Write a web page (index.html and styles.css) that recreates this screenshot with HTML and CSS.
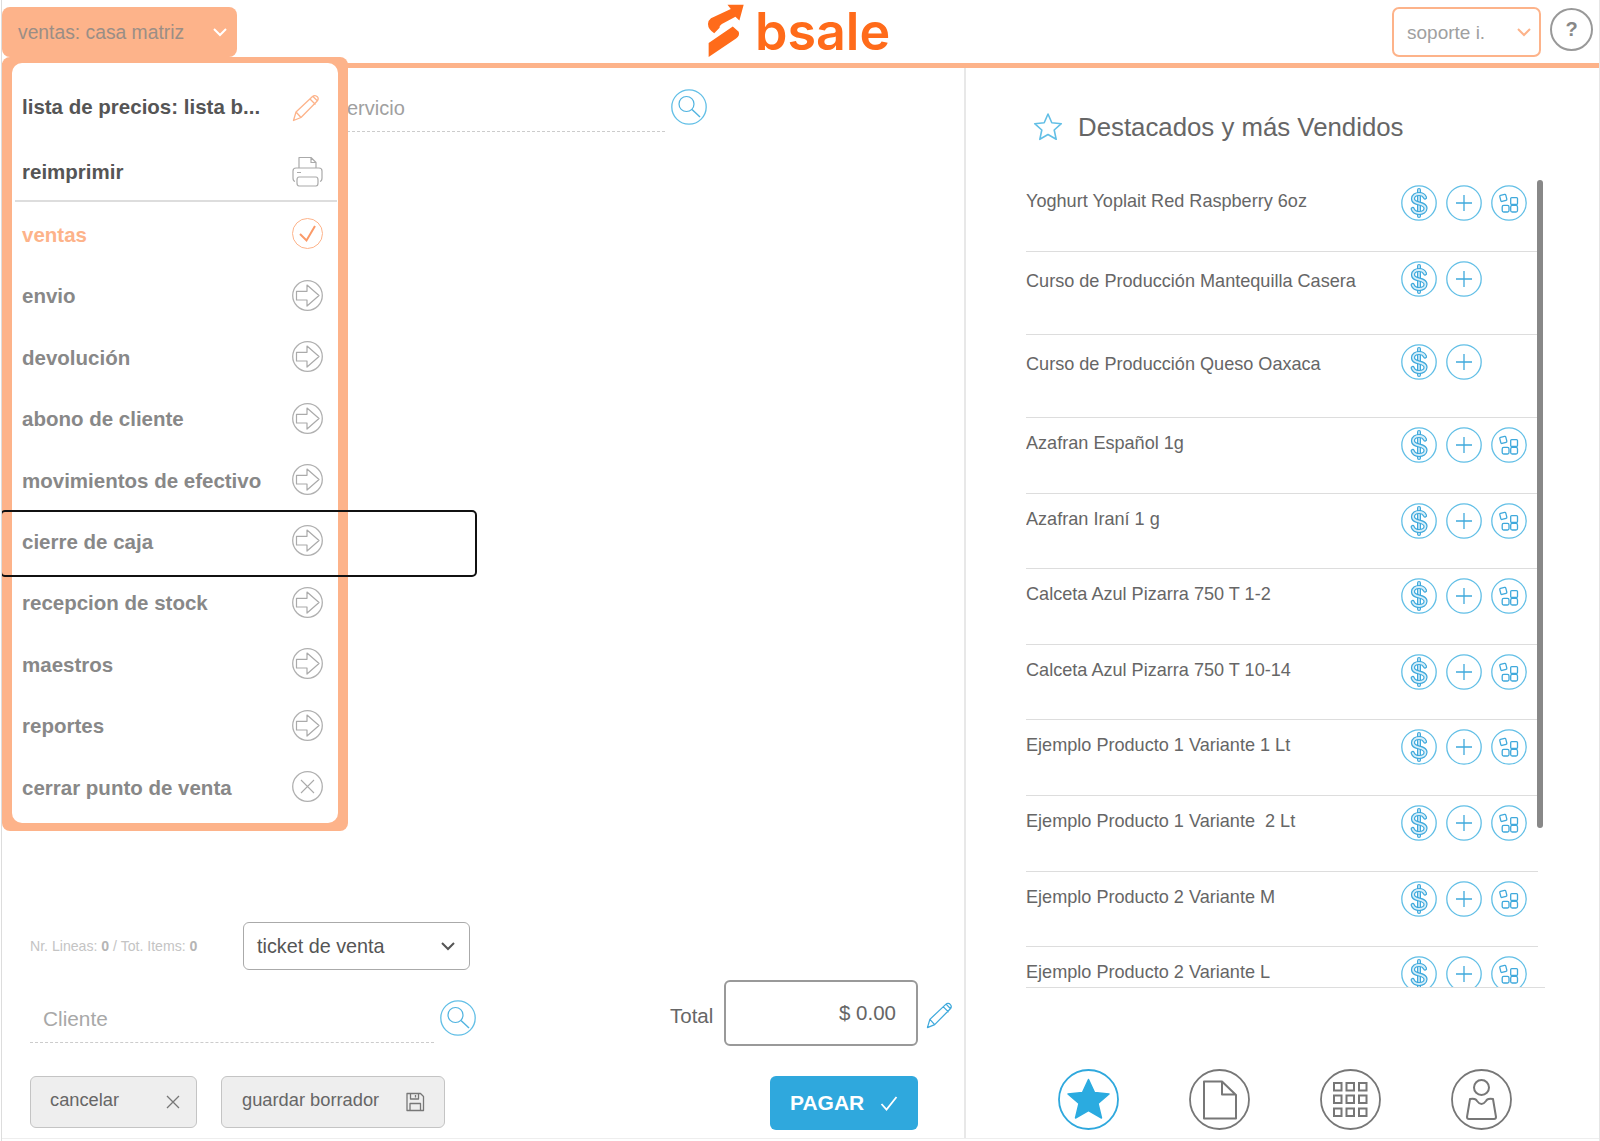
FILE: index.html
```html
<!DOCTYPE html>
<html lang="es">
<head>
<meta charset="utf-8">
<title>bsale</title>
<link rel="stylesheet" href="styles.css">
</head>
<body>
<svg class="defs" width="0" height="0" aria-hidden="true">
  <symbol id="i-search" viewBox="0 0 36 36">
    <circle cx="18" cy="18" r="17.2" fill="none" stroke="#62bfe6" stroke-width="1.3"/>
    <circle cx="15.5" cy="15" r="7.5" fill="none" stroke="#4fb3e0" stroke-width="1.2"/>
    <path d="M21 20.500L29 28" stroke="#4fb3e0" stroke-width="1.4" fill="none"/>
  </symbol>
  <symbol id="i-dollar" viewBox="0 0 36 36">
    <circle cx="18" cy="18" r="17.2" fill="none" stroke="#62bfe6" stroke-width="1.3"/>
    <path d="M18 5V31" stroke="#3fa9dc" stroke-width="4" stroke-linecap="round"/>
    <path d="M18 5V31" stroke="#bfe3f4" stroke-width="1.800" stroke-linecap="round"/>
    <path d="M24 12.500C23 10 20.500 9 18 9c-3 0-6 1.800-6 4.800 0 6.500 12.500 3 12.500 9.500 0 3-3 4.700-6.300 4.700-3 0-5.500-1.300-6.500-4" fill="none" stroke="#3fa9dc" stroke-width="4.200" stroke-linecap="round"/>
    <path d="M24 12.500C23 10 20.500 9 18 9c-3 0-6 1.800-6 4.800 0 6.500 12.500 3 12.500 9.500 0 3-3 4.700-6.300 4.700-3 0-5.500-1.300-6.500-4" fill="none" stroke="#d6eef9" stroke-width="1.800" stroke-linecap="round"/>
  </symbol>
  <symbol id="i-plus" viewBox="0 0 36 36">
    <circle cx="18" cy="18" r="17.2" fill="none" stroke="#62bfe6" stroke-width="1.3"/>
    <path d="M18 10V26M10 18H26" stroke="#3fa9dc" stroke-width="1.3" fill="none"/>
  </symbol>
  <symbol id="i-variants" viewBox="0 0 36 36">
    <circle cx="18" cy="18" r="17.2" fill="none" stroke="#62bfe6" stroke-width="1.3"/>
    <g fill="none" stroke="#3fa9dc" stroke-width="1.3" stroke-linejoin="round">
      <rect x="9.200" y="9.800" width="6.200" height="6.200" rx="1" transform="rotate(-14 12.300 12.900)"/>
      <rect x="19.700" y="12.600" width="6.800" height="6.800" rx="1"/>
      <rect x="11.200" y="20.400" width="6.800" height="6.600" rx="1.500"/>
      <rect x="19.700" y="20.400" width="6.800" height="6.600" rx="1.500"/>
    </g>
  </symbol>
  <symbol id="i-arrow" viewBox="0 0 31 31">
    <circle cx="15.500" cy="15.500" r="14.800" fill="none" stroke="#b0b0b0" stroke-width="1.300"/>
    <path d="M4.500 11.300H15V5L27 15.500 15 26V20H4.500z" fill="none" stroke="#aaa" stroke-width="1.200" stroke-linejoin="round"/>
  </symbol>
  <symbol id="i-pencil" viewBox="0 0 28 28">
    <path d="M1.500 26.500L4 18 20.500 2.500c1.500-1.400 3.500-1.200 4.800.2 1.200 1.400 1.100 3.100-.3 4.500L9 23.500zM4 18l5 5.500M18 5l5.500 5.500M21 2.500l4.500 4.500" fill="none" stroke="currentColor" stroke-width="1.300" stroke-linejoin="round"/>
  </symbol>
</svg>

<div class="app">
  <header class="topbar">
    <div class="section-select">
      <span class="section-label">ventas: casa matriz</span>
      <svg class="chev" width="14" height="9" viewBox="0 0 14 9"><path d="M1 1l6 6 6-6" fill="none" stroke="#fff" stroke-width="2"/></svg>
    </div>
    <div class="logo">
      <svg class="logo-mark" width="38" height="57" viewBox="50 10 115 170"><path d="M53 72Q53 62 62 55L122 27 112 14H161L148 62 136 50 95 72Q86 78 88 84L72 100Q53 88 53 72Z"/><path d="M128 80L146 96Q150 108 138 116L55 172V130Z"/></svg>
      <span class="logo-text">bsale</span>
    </div>
    <div class="top-right">
      <div class="user-select">
        <span>soporte i.</span>
        <svg width="14" height="9" viewBox="0 0 14 9"><path d="M1 1l6 6 6-6" fill="none" stroke="#fdb38a" stroke-width="2"/></svg>
      </div>
      <div class="help">?</div>
    </div>
  </header>

  <main class="main">
    <section class="left">
      <div class="search-row">
        <div class="search-input">servicio</div>
        <svg class="round-icon"><use href="#i-search"/></svg>
      </div>

      <div class="foot">
        <div class="foot-left">
          <div class="doc-row">
            <div class="counts">Nr. Lineas: <b>0</b> / Tot. Items: <b>0</b></div>
            <div class="doc-select">
              <span>ticket de venta</span>
              <svg width="14" height="9" viewBox="0 0 14 9"><path d="M1 1l6 6 6-6" fill="none" stroke="#555" stroke-width="2"/></svg>
            </div>
          </div>
          <div class="client-row">
            <div class="client-input">Cliente</div>
            <svg class="round-icon"><use href="#i-search"/></svg>
          </div>
          <div class="btn-row">
            <div class="btn btn-cancel">
              <span>cancelar</span>
              <svg width="14" height="14" viewBox="0 0 14 14"><path d="M1 1l12 12M13 1L1 13" stroke="#777" stroke-width="1.300"/></svg>
            </div>
            <div class="btn btn-draft">
              <span>guardar borrador</span>
              <svg width="20" height="20" viewBox="0 0 20 20"><path d="M2 1.500h13.500L18.500 4.500V18.500H2zM5.500 1.500V7h8V1.500M5 18.500V11.500h10.500v7M10.500 3v2.500" fill="none" stroke="#777" stroke-width="1.300" stroke-linejoin="round"/></svg>
            </div>
          </div>
        </div>
        <div class="foot-right">
          <div class="total-row">
            <span class="total-label">Total</span>
            <div class="total-box">$ 0.00</div>
            <svg class="pencil-blue"><use href="#i-pencil"/></svg>
          </div>
          <div class="pay">
            <span>PAGAR</span>
            <svg width="18" height="15" viewBox="0 0 18 15"><path d="M1.500 8l5 5.500L16.500 1" fill="none" stroke="#fff" stroke-width="1.800"/></svg>
          </div>
        </div>
      </div>
    </section>

    <section class="right">
      <div class="title-row">
        <svg class="title-star" width="30" height="30" viewBox="0 0 30 30"><path d="M15 2L18.800 10.700 28.300 11.700 21.200 18 23.200 27.300 15 22.500 6.800 27.300 8.800 18 1.700 11.700 11.200 10.700Z" fill="none" stroke="#62bfe6" stroke-width="1.600" stroke-linejoin="round"/></svg>
        <h2 class="title">Destacados y más Vendidos</h2>
      </div>

      <div class="products">
        <div class="scroll-thumb"></div>
        <div class="product">
          <span class="product-name">Yoghurt Yoplait Red Raspberry 6oz</span>
          <div class="product-actions"><svg class="round-icon"><use href="#i-dollar"/></svg><svg class="round-icon"><use href="#i-plus"/></svg><svg class="round-icon"><use href="#i-variants"/></svg></div>
        </div>
        <div class="product product-simple">
          <span class="product-name">Curso de Producción Mantequilla Casera</span>
          <div class="product-actions"><svg class="round-icon"><use href="#i-dollar"/></svg><svg class="round-icon"><use href="#i-plus"/></svg></div>
        </div>
        <div class="product product-simple">
          <span class="product-name">Curso de Producción Queso Oaxaca</span>
          <div class="product-actions"><svg class="round-icon"><use href="#i-dollar"/></svg><svg class="round-icon"><use href="#i-plus"/></svg></div>
        </div>
        <div class="product">
          <span class="product-name">Azafran Español 1g</span>
          <div class="product-actions"><svg class="round-icon"><use href="#i-dollar"/></svg><svg class="round-icon"><use href="#i-plus"/></svg><svg class="round-icon"><use href="#i-variants"/></svg></div>
        </div>
        <div class="product">
          <span class="product-name">Azafran Iraní 1 g</span>
          <div class="product-actions"><svg class="round-icon"><use href="#i-dollar"/></svg><svg class="round-icon"><use href="#i-plus"/></svg><svg class="round-icon"><use href="#i-variants"/></svg></div>
        </div>
        <div class="product">
          <span class="product-name">Calceta Azul Pizarra 750 T 1-2</span>
          <div class="product-actions"><svg class="round-icon"><use href="#i-dollar"/></svg><svg class="round-icon"><use href="#i-plus"/></svg><svg class="round-icon"><use href="#i-variants"/></svg></div>
        </div>
        <div class="product">
          <span class="product-name">Calceta Azul Pizarra 750 T 10-14</span>
          <div class="product-actions"><svg class="round-icon"><use href="#i-dollar"/></svg><svg class="round-icon"><use href="#i-plus"/></svg><svg class="round-icon"><use href="#i-variants"/></svg></div>
        </div>
        <div class="product">
          <span class="product-name">Ejemplo Producto 1 Variante 1 Lt</span>
          <div class="product-actions"><svg class="round-icon"><use href="#i-dollar"/></svg><svg class="round-icon"><use href="#i-plus"/></svg><svg class="round-icon"><use href="#i-variants"/></svg></div>
        </div>
        <div class="product">
          <span class="product-name">Ejemplo Producto 1 Variante&nbsp; 2 Lt</span>
          <div class="product-actions"><svg class="round-icon"><use href="#i-dollar"/></svg><svg class="round-icon"><use href="#i-plus"/></svg><svg class="round-icon"><use href="#i-variants"/></svg></div>
        </div>
        <div class="product">
          <span class="product-name">Ejemplo Producto 2 Variante M</span>
          <div class="product-actions"><svg class="round-icon"><use href="#i-dollar"/></svg><svg class="round-icon"><use href="#i-plus"/></svg><svg class="round-icon"><use href="#i-variants"/></svg></div>
        </div>
        <div class="product">
          <span class="product-name">Ejemplo Producto 2 Variante L</span>
          <div class="product-actions"><svg class="round-icon"><use href="#i-dollar"/></svg><svg class="round-icon"><use href="#i-plus"/></svg><svg class="round-icon"><use href="#i-variants"/></svg></div>
        </div>
      </div>

      <nav class="tabs">
        <svg class="tab" viewBox="0 0 61 61"><circle cx="30.500" cy="30.500" r="29.500" fill="none" stroke="#2fa8dd" stroke-width="1.800"/><path d="M30.500 10.500L36.500 23.500 51 25 40 34.500 43.500 49 30.500 41.500 17.500 49 21 34.500 10 25 24.500 23.500Z" fill="#2babe0" stroke="#2babe0" stroke-width="1.500" stroke-linejoin="round"/></svg>
        <svg class="tab" viewBox="0 0 61 61"><circle cx="30.500" cy="30.500" r="29.500" fill="none" stroke="#777" stroke-width="1.800"/><path d="M15 12.500H33L47 26V49.500H15ZM33 12.500V25.500H47" fill="none" stroke="#777" stroke-width="2" stroke-linejoin="round"/></svg>
        <svg class="tab" viewBox="0 0 61 61"><circle cx="30.500" cy="30.500" r="29.500" fill="none" stroke="#777" stroke-width="1.800"/><g fill="none" stroke="#777" stroke-width="2"><rect x="14" y="14" width="7.500" height="7.500"/><rect x="26.500" y="14" width="7.500" height="7.500"/><rect x="39" y="14" width="7.500" height="7.500"/><rect x="14" y="26.500" width="7.500" height="7.500"/><rect x="26.500" y="26.500" width="7.500" height="7.500"/><rect x="39" y="26.500" width="7.500" height="7.500"/><rect x="14" y="39.500" width="7.500" height="7.500"/><rect x="26.500" y="39.500" width="7.500" height="7.500"/><rect x="39" y="39.500" width="7.500" height="7.500"/></g></svg>
        <svg class="tab" viewBox="0 0 61 61"><circle cx="30.500" cy="30.500" r="29.500" fill="none" stroke="#777" stroke-width="1.800"/><g fill="none" stroke="#777" stroke-width="2" stroke-linejoin="round"><circle cx="30.500" cy="18.500" r="7.500"/><path d="M19 30Q25 29 26 32Q30.500 38 35 32Q36 29 42 30L45 48Q45 50 43 50H18Q16 50 16 48Z"/></g></svg>
      </nav>
    </section>
  </main>

  <aside class="menu">
    <div class="menu-inner">
      <div class="menu-head">
        <div class="menu-row menu-row-first">
          <span class="menu-text menu-dark">lista de precios: lista b...</span>
          <svg class="menu-pencil"><use href="#i-pencil"/></svg>
        </div>
        <div class="menu-row menu-row-print">
          <span class="menu-text menu-dark">reimprimir</span>
          <svg width="31" height="31" viewBox="0 0 31 31"><path d="M7 12V1.500H19L24 6.500V12M19 1.500V6.500H24M3 25.500Q1 25 1 22V15Q1 12 4 12H27Q30 12 30 15V22Q30 25 28 25.500M7 21H24Q26 21 26 24V27Q26 30 24 30H7Q5 30 5 27V24Q5 21 7 21ZM5 16.500H9" fill="none" stroke="#aaa" stroke-width="1.200" stroke-linejoin="round"/></svg>
        </div>
      </div>
      <div class="menu-row menu-active">
        <span class="menu-text">ventas</span>
        <svg width="31" height="31" viewBox="0 0 31 31"><circle cx="15.500" cy="15.500" r="15" fill="none" stroke="#fdb38a" stroke-width="1"/><path d="M8 16l6.500 6.500L23 8" fill="none" stroke="#fb9a68" stroke-width="2"/></svg>
      </div>
      <div class="menu-row"><span class="menu-text">envio</span><svg class="menu-icon"><use href="#i-arrow"/></svg></div>
      <div class="menu-row"><span class="menu-text">devolución</span><svg class="menu-icon"><use href="#i-arrow"/></svg></div>
      <div class="menu-row"><span class="menu-text">abono de cliente</span><svg class="menu-icon"><use href="#i-arrow"/></svg></div>
      <div class="menu-row"><span class="menu-text">movimientos de efectivo</span><svg class="menu-icon"><use href="#i-arrow"/></svg></div>
      <div class="menu-row"><span class="menu-text">cierre de caja</span><svg class="menu-icon"><use href="#i-arrow"/></svg></div>
      <div class="menu-row"><span class="menu-text">recepcion de stock</span><svg class="menu-icon"><use href="#i-arrow"/></svg></div>
      <div class="menu-row"><span class="menu-text">maestros</span><svg class="menu-icon"><use href="#i-arrow"/></svg></div>
      <div class="menu-row"><span class="menu-text">reportes</span><svg class="menu-icon"><use href="#i-arrow"/></svg></div>
      <div class="menu-row">
        <span class="menu-text">cerrar punto de venta</span>
        <svg width="31" height="31" viewBox="0 0 31 31"><circle cx="15.500" cy="15.500" r="14.800" fill="none" stroke="#b0b0b0" stroke-width="1.300"/><path d="M9 9l13 13M22 9L9 22" stroke="#aaa" stroke-width="1.100"/></svg>
      </div>
    </div>
  </aside>

  <div class="tour-highlight"></div>
</div>
</body>
</html>
```

FILE: styles.css
```css
* { box-sizing: border-box; }

html, body {
  margin: 0;
  padding: 0;
  background: #fff;
}

body {
  font-family: "Liberation Sans", Arial, sans-serif;
  color: #666;
}

.defs { position: absolute; }

.app {
  position: relative;
  width: 1599px;
  height: 1141px;
  margin-left: 1px;
  border-left: 1px solid #ddd;
  border-right: 1px solid #e6e6e6;
  overflow: hidden;
  display: flex;
  flex-direction: column;
}

/* top bar */
.topbar {
  flex: none;
  height: 68px;
  border-bottom: 5px solid #fdb38a;
  display: grid;
  grid-template-columns: 705px 1fr auto;
  align-items: start;
}

.section-select {
  grid-column: 1;
  justify-self: start;
  width: 235px;
  height: 50px;
  margin-top: 7px;
  padding: 0 10px 0 16px;
  background: #fdb38a;
  border-radius: 8px;
  display: flex;
  align-items: center;
  justify-content: space-between;
}

.section-label {
  margin-top: 2px;
  font-size: 19.300px;
  color: #9a8e86;
}

.logo {
  display: flex;
  align-items: flex-start;
  gap: 10px;
  margin-top: 3px;
  color: #ff6b1a;
}

.logo-mark { fill: #ff6b1a; flex: none; }

.logo-text {
  font-family: Inter, "Liberation Sans", sans-serif;
  font-size: 52px;
  font-weight: 600;
  line-height: 58px;
}

.top-right {
  display: flex;
  align-items: flex-start;
  gap: 9px;
  margin-right: 6px;
}

.user-select {
  width: 149px;
  height: 50px;
  margin-top: 7px;
  padding: 0 8px 0 13px;
  border: 2px solid #fdb38a;
  border-radius: 7px;
  display: flex;
  align-items: center;
  justify-content: space-between;
  font-size: 19px;
  color: #a0a0a0;
}

.user-select span { margin-top: 2px; }

.help {
  width: 43px;
  height: 43px;
  margin-top: 8px;
  border: 2px solid #999;
  border-radius: 50%;
  text-align: center;
  font-size: 20px;
  font-weight: 700;
  line-height: 38px;
  color: #888;
}

/* main columns */
.main {
  flex: 1;
  display: flex;
  min-height: 0;
  margin-bottom: 2px;
  border-bottom: 1px solid #eee;
}

.left {
  width: 962px;
  flex: none;
  display: flex;
  flex-direction: column;
  justify-content: space-between;
  padding-left: 28px;
}

.round-icon {
  width: 36px;
  height: 36px;
  flex: none;
  display: block;
}

.search-row {
  display: flex;
  gap: 6px;
  margin: 21px 0 0 307px;
}

.search-input {
  width: 328px;
  height: 43px;
  border-bottom: 1px dashed #ccc;
  font-size: 20px;
  line-height: 38px;
  color: #a0a0a0;
}

/* footer of left column */
.foot {
  display: flex;
}

.foot-left {
  width: 448px;
  display: flex;
  flex-direction: column;
  padding-bottom: 10px;
}

.doc-row {
  display: flex;
  align-items: center;
  justify-content: space-between;
  padding-right: 8px;
}

.counts {
  font-size: 14.100px;
  color: #c4c4c4;
}

.counts b { color: #b5b5b5; }

.doc-select {
  width: 227px;
  height: 48px;
  padding: 0 14px 0 13px;
  border: 1px solid #aaa;
  border-radius: 6px;
  display: flex;
  align-items: center;
  justify-content: space-between;
  font-size: 19.800px;
  color: #555;
}

.client-row {
  display: flex;
  gap: 6px;
  margin-top: 26px;
}

.client-input {
  width: 404px;
  height: 47px;
  padding-left: 13px;
  border-bottom: 1px dashed #ccc;
  font-size: 20.800px;
  line-height: 46px;
  color: #a8a8a8;
}

.client-row .round-icon { margin-top: 4px; }

.btn-row {
  display: flex;
  gap: 24px;
  margin-top: 33px;
}

.btn {
  height: 52px;
  background: #eee;
  border: 1px solid #c4c4c4;
  border-radius: 6px;
  display: flex;
  align-items: center;
  justify-content: space-between;
  font-size: 18.300px;
  color: #666;
}

.btn-cancel { width: 167px; padding: 0 16px 0 19px; }
.btn-draft { width: 224px; padding: 0 19px 0 20px; }

.btn span { margin-top: -4px; }

.foot-right {
  margin-left: 192px;
  padding-bottom: 8px;
  display: flex;
  flex-direction: column;
  justify-content: flex-end;
  gap: 30px;
}

.total-row {
  display: flex;
  align-items: center;
}

.total-label {
  width: 54px;
  margin-top: 5px;
  font-size: 20.500px;
  color: #666;
}

.total-box {
  width: 194px;
  height: 66px;
  padding-right: 20px;
  border: 2px solid #999;
  border-radius: 6px;
  text-align: right;
  font-size: 20.500px;
  line-height: 61px;
  color: #666;
}

.pencil-blue {
  width: 27px;
  height: 27px;
  margin: 4px 0 0 8px;
  color: #3fa9dc;
}

.pay {
  width: 148px;
  height: 54px;
  margin-left: 100px;
  padding: 0 20px;
  background: #2fa8dd;
  border-radius: 6px;
  display: flex;
  align-items: center;
  justify-content: space-between;
  font-size: 21px;
  font-weight: 700;
  color: #fff;
}

/* right column */
.right {
  flex: 1;
  border-left: 2px solid #e8e8e8;
  display: flex;
  flex-direction: column;
}

.title-row {
  display: flex;
  align-items: center;
  gap: 15px;
  height: 38px;
  margin: 40px 0 30.400px 67px;
}

.title {
  margin: 0;
  font-size: 25.800px;
  font-weight: 400;
  color: #666;
}

.products {
  position: relative;
  width: 519px;
  height: 811.600px;
  margin-left: 60px;
  overflow: hidden;
  border-bottom: 1px solid #ddd;
}

.scroll-thumb {
  position: absolute;
  top: 4px;
  left: 511px;
  width: 6px;
  height: 648px;
  background: #888;
  border-radius: 3px;
}

.product {
  width: 512px;
  height: 75.600px;
  padding-top: 9px;
  border-bottom: 1px solid #ddd;
  display: flex;
  align-items: flex-start;
}

.product-simple { height: 83px; }

.product-name {
  width: 375px;
  flex: none;
  margin-top: 6px;
  font-size: 18.100px;
  line-height: 20px;
  color: #666;
}

.product-simple .product-name { margin-top: 10px; }

.product-actions {
  display: flex;
  gap: 9px;
}

.tabs {
  margin-top: auto;
  padding: 0 0 8px 92px;
  display: flex;
  gap: 70px;
}

.tab {
  width: 61px;
  height: 61px;
  display: block;
}

/* open dropdown, lies over the page */
.menu {
  position: absolute;
  top: 57px;
  left: 0;
  width: 346px;
  height: 774px;
  padding: 6px 10px 8px;
  background: #fdb38a;
  border-radius: 8px;
}

.menu-inner {
  height: 100%;
  padding: 11px 0 5px;
  background: #fff;
  border-radius: 10px;
}

.menu-head {
  margin: 0 1px 1.300px 3px;
  border-bottom: 2px solid #ddd;
}

.menu-row {
  height: 61.400px;
  padding: 0 15px 0 10px;
  display: flex;
  align-items: center;
  justify-content: space-between;
}

.menu-head .menu-row {
  padding: 0 14px 0 7px;
}

.menu-head .menu-row-first { height: 64px; }
.menu-head .menu-row-print { height: 62px; padding-top: 4px; }

.menu-text {
  margin-top: 2px;
  font-size: 20.500px;
  font-weight: 700;
  color: #888;
  white-space: nowrap;
}

.menu-text.menu-dark {
  color: #555;
}

.menu-active .menu-text { color: #fdb38a; }

.menu-icon {
  width: 31px;
  height: 31px;
  flex: none;
}

.menu-pencil {
  width: 28px;
  height: 28px;
  margin: 3px 3px 0 0;
  color: #fdb38a;
}

/* tour highlight box */
.tour-highlight {
  position: absolute;
  top: 510px;
  left: -2px;
  width: 477px;
  height: 67px;
  border: 2px solid #111;
  border-radius: 5px;
}
```
